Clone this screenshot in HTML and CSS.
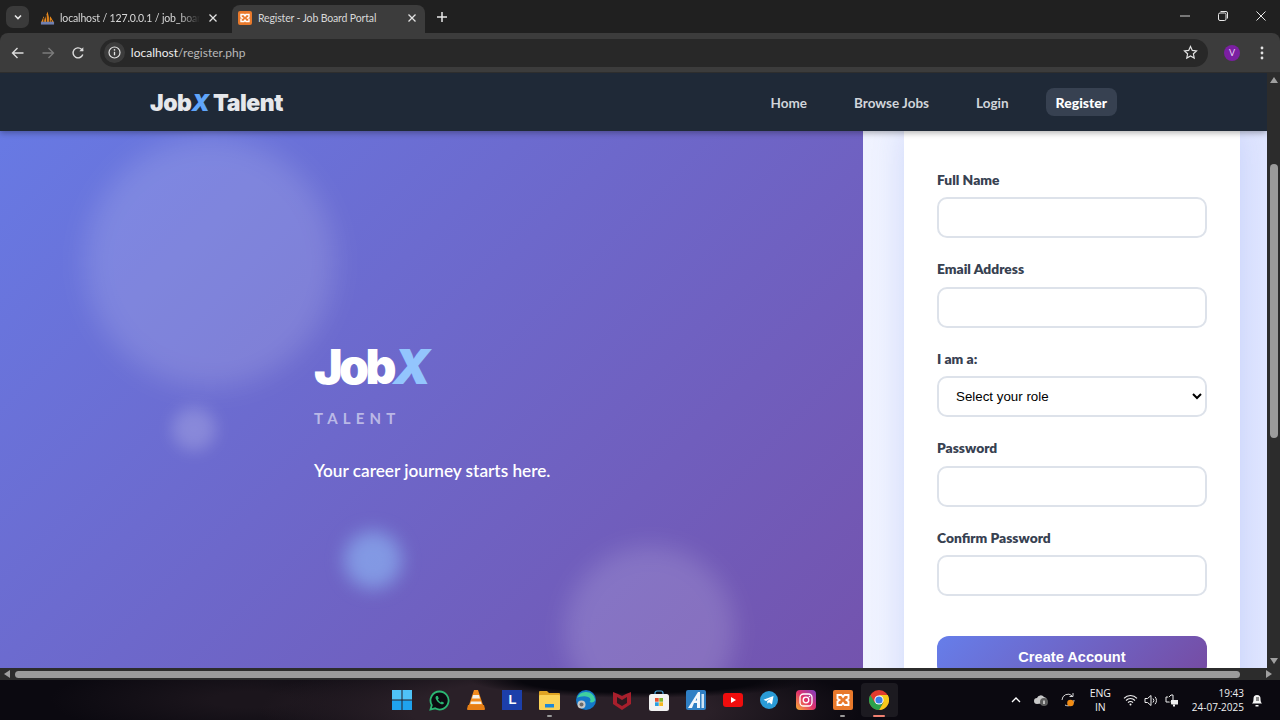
FILE: index.html
```html
<!DOCTYPE html>
<html>
<head>
    <title>Register - Job Board Portal</title>
    <link rel="stylesheet" href="styles.css">
</head>
<body>
    <div class="tabstrip">
        <div class="tab-search">
            <svg width="10" height="10" viewBox="0 0 10 10"><path d="M2 3.5 5 6.5 8 3.5" fill="none" stroke="#e8e8e8" stroke-width="1.6"/></svg>
        </div>
        <div class="tab">
            <svg class="favicon favicon-pma" width="15" height="16" viewBox="0 0 16 16">
                <path d="M1 13 4 6l1 4 3-9 2 8 1-3 4 7z" fill="#e8891c"/>
                <path d="M7 13V5M4 13V8M10 13V7M12 13v-3" stroke="#3b2a1a" stroke-width="1"/>
                <rect x="1" y="12" width="14" height="3" fill="#6f7fb0"/>
            </svg>
            <span class="tab-title tab-title-faded">localhost / 127.0.0.1 / job_boar</span>
            <svg class="tab-close" width="10" height="10" viewBox="0 0 10 10"><path d="M1.5 1.5l7 7M8.5 1.5l-7 7" stroke="#e3e3e3" stroke-width="1.3"/></svg>
        </div>
        <div class="tab tab-active">
            <svg class="favicon" width="14" height="14" viewBox="0 0 14 14">
                <rect width="14" height="14" rx="2" fill="#e8792b"/>
                <path d="M3 3.5h3L7 5l1-1.500h3v2.500L9.500 7 11 8v2.500H8L7 9l-1 1.500H3V8l1.500-1L3 6z" fill="none" stroke="#fff" stroke-width="1.400"/>
            </svg>
            <span class="tab-title">Register - Job Board Portal</span>
            <svg class="tab-close" width="10" height="10" viewBox="0 0 10 10"><path d="M1.5 1.5l7 7M8.5 1.5l-7 7" stroke="#e3e3e3" stroke-width="1.3"/></svg>
        </div>
        <svg class="new-tab" width="12" height="12" viewBox="0 0 12 12"><path d="M6 1v10M1 6h10" stroke="#e8e8e8" stroke-width="1.500"/></svg>
        <div class="window-controls">
            <svg width="10" height="10" viewBox="0 0 10 10"><path d="M0 5h10" stroke="#cfcfcf" stroke-width="1"/></svg>
            <svg width="10" height="10" viewBox="0 0 10 10"><rect x="0.500" y="2" width="7.500" height="7.500" rx="1.500" fill="none" stroke="#e8e8e8"/><path d="M2.500 .5h5.500a1.500 1.500 0 0 1 1.500 1.500v5.500" fill="none" stroke="#e8e8e8"/></svg>
            <svg width="10" height="10" viewBox="0 0 10 10"><path d="M.5.5l9 9M9.500.5l-9 9" stroke="#e8e8e8" stroke-width="1"/></svg>
        </div>
    </div>

    <div class="toolbar">
        <div class="toolbar-btns">
            <svg width="14" height="14" viewBox="0 0 14 14"><path d="M12.500 7h-11M6.500 2 1.500 7l5 5" fill="none" stroke="#dcdcdc" stroke-width="1.400"/></svg>
            <svg width="14" height="14" viewBox="0 0 14 14"><path d="M1.500 7h11M7.500 2l5 5-5 5" fill="none" stroke="#7b7b7b" stroke-width="1.400"/></svg>
            <svg width="14" height="14" viewBox="0 0 14 14"><path d="M11.800 8.500A5 5 0 1 1 10.500 3.200L12 4.700" fill="none" stroke="#dcdcdc" stroke-width="1.400"/><path d="M12.300 1.300v4h-4z" fill="#dcdcdc"/></svg>
        </div>
        <div class="omnibox">
            <div class="site-info">
                <svg width="13" height="13" viewBox="0 0 13 13"><circle cx="6.500" cy="6.500" r="5.500" fill="none" stroke="#e3e3e3" stroke-width="1.200"/><path d="M6.500 5.800v3.500" stroke="#e3e3e3" stroke-width="1.300"/><circle cx="6.500" cy="3.900" r=".8" fill="#e3e3e3"/></svg>
            </div>
            <span class="url"><span class="url-host">localhost</span>/register.php</span>
            <svg class="star" width="15" height="15" viewBox="0 0 15 15"><path d="M7.500 1.500l1.800 3.900 4.200.5-3.100 2.900.8 4.200-3.700-2.100-3.700 2.100.8-4.200L1.500 5.900l4.200-.5z" fill="none" stroke="#e3e3e3" stroke-width="1.200"/></svg>
        </div>
        <div class="avatar">V</div>
        <svg class="kebab" width="4" height="14" viewBox="0 0 4 14"><circle cx="2" cy="2" r="1.400" fill="#e3e3e3"/><circle cx="2" cy="7" r="1.400" fill="#e3e3e3"/><circle cx="2" cy="12" r="1.400" fill="#e3e3e3"/></svg>
    </div>

    <div class="viewport">
        <div class="page">
            <nav class="navbar">
                <div class="brand">Job<em>X</em> Talent</div>
                <div class="nav-links">
                    <a href="#">Home</a>
                    <a href="#">Browse Jobs</a>
                    <a href="#">Login</a>
                    <a href="#" class="nav-active">Register</a>
                </div>
            </nav>
            <div class="register">
                <section class="hero">
                    <span class="blob blob-big"></span>
                    <span class="blob blob-small"></span>
                    <span class="blob blob-blue"></span>
                    <span class="blob blob-pink"></span>
                    <div class="hero-logo">Job<em>X</em></div>
                    <div class="hero-sub">TALENT</div>
                    <p class="hero-tagline">Your career journey starts here.</p>
                </section>
                <section class="form-panel">
                    <form class="form-card">
                        <div class="form-group">
                            <label>Full Name</label>
                            <input type="text">
                        </div>
                        <div class="form-group">
                            <label>Email Address</label>
                            <input type="email">
                        </div>
                        <div class="form-group">
                            <label>I am a:</label>
                            <select><option>Select your role</option></select>
                        </div>
                        <div class="form-group">
                            <label>Password</label>
                            <input type="password">
                        </div>
                        <div class="form-group">
                            <label>Confirm Password</label>
                            <input type="password">
                        </div>
                        <button type="button" class="submit-btn">Create Account</button>
                    </form>
                </section>
            </div>
        </div>
        <div class="vscroll">
            <span class="arrow-up"></span>
            <span class="vthumb"></span>
            <span class="arrow-down"></span>
        </div>
    </div>
    <div class="hscroll">
        <span class="arrow-left"></span>
        <span class="hthumb"></span>
        <span class="arrow-right"></span>
    </div>

    <footer class="taskbar">
        <div class="task-icons">
            <div class="task-icon">
                <svg width="20" height="20" viewBox="0 0 20 20"><rect width="9.500" height="9.500" fill="#4fc3f7"/><rect x="10.500" width="9.500" height="9.500" fill="#4fc3f7"/><rect y="10.500" width="9.500" height="9.500" fill="#1fa2ee"/><rect x="10.500" y="10.500" width="9.500" height="9.500" fill="#1fa2ee"/></svg>
            </div>
            <div class="task-icon">
                <svg width="21" height="21" viewBox="0 0 21 21"><path d="M10.500 1.500a9 9 0 0 0-7.700 13.600L1.500 19.500l4.600-1.200A9 9 0 1 0 10.500 1.500z" fill="#0b0b10" stroke="#2bb673" stroke-width="1.800"/><path d="M7.300 6c-.9.800-1.100 2 .1 4 1.200 2 3 3.600 5 4.200 1.300.3 2.300-.3 2.600-1.500l-2.200-1.200-1 1c-1.200-.6-2.300-1.700-2.900-2.900l.9-1L8.800 6z" fill="#2bb673"/></svg>
            </div>
            <div class="task-icon">
                <svg width="18" height="20" viewBox="0 0 18 20"><path d="M7 0h4l5 15H2z" fill="#f08a1d"/><path d="M6 5h6l1 3.500H5zM4 11.500h10l.7 2.500H3.300z" fill="#f3f0e8"/><path d="M1 15h16l1 4a1 1 0 0 1-1 1H1a1 1 0 0 1-1-1z" fill="#e67e14"/></svg>
            </div>
            <div class="task-icon">
                <div class="icon-l">L</div>
            </div>
            <div class="task-icon">
                <svg width="21" height="20" viewBox="0 0 21 20"><path d="M0 2a1 1 0 0 1 1-1h7l2 2h10a1 1 0 0 1 1 1v3H0z" fill="#e0a423"/><rect y="5" width="21" height="15" rx="1" fill="#fbd257"/><rect x="6" y="14" width="9" height="3.500" fill="#1f88d8"/></svg>
                <i class="running"></i>
            </div>
            <div class="task-icon">
                <svg width="20" height="20" viewBox="0 0 20 20"><circle cx="10" cy="10" r="10" fill="#1478c8"/><path d="M1 8a9.500 9.500 0 0 1 18 1c.6 3-3 4-5.500 3 1.500-1 1.500-4-1.500-5-4-1.500-9 0-11 1z" fill="#3fd0a0"/><circle cx="5.500" cy="14.500" r="4" fill="#c8c8c8"/><circle cx="5.500" cy="14.500" r="2" fill="#6c6c6c"/></svg>
            </div>
            <div class="task-icon">
                <svg width="18" height="20" viewBox="0 0 18 20"><path d="M0 2l5 2 4 2 4-2 5-2v12l-9 6-9-6z" fill="#a81f2c"/><path d="M4 7l5 3 5-3v6l-5 3-5-3z" fill="#2a1a20"/></svg>
            </div>
            <div class="task-icon">
                <svg width="20" height="21" viewBox="0 0 20 21"><path d="M6 5V3a2 2 0 0 1 2-2h4a2 2 0 0 1 2 2v2" fill="none" stroke="#4aa5dc" stroke-width="1.200"/><rect y="4" width="20" height="17" rx="2.500" fill="#f2f2f2"/><rect x="6" y="8" width="3.700" height="3.700" fill="#e8502f"/><rect x="10.300" y="8" width="3.700" height="3.700" fill="#7db52f"/><rect x="6" y="12.300" width="3.700" height="3.700" fill="#2a9fe0"/><rect x="10.300" y="12.300" width="3.700" height="3.700" fill="#f5b81f"/></svg>
            </div>
            <div class="task-icon">
                <svg width="20" height="20" viewBox="0 0 20 20"><rect width="20" height="20" rx="2" fill="#2f7fc4"/><path d="M2 18 12 2h2v16h-3v-5H8l-2 5z" fill="#f2f6fa"/><path d="M9.500 10.500 11 8v2.500z" fill="#2f7fc4"/><path d="M15.500 4H18v14h-2.500z" fill="#cfe4f5"/></svg>
            </div>
            <div class="task-icon">
                <svg width="20" height="14" viewBox="0 0 20 14"><rect width="20" height="14" rx="3" fill="#f00d0d"/><path d="M8 4l5 3-5 3z" fill="#fff"/></svg>
            </div>
            <div class="task-icon">
                <svg width="18" height="18" viewBox="0 0 18 18"><circle cx="9" cy="9" r="9" fill="#2a9bd6"/><path d="M3.500 8.800 13.500 5l-1.500 8.500-3-2.200-1.500 1.500-.4-2.500 4-3-5 2.700z" fill="#fff"/></svg>
            </div>
            <div class="task-icon">
                <svg width="20" height="20" viewBox="0 0 20 20">
                    <defs><linearGradient id="ig" x1="0" y1="1" x2="1" y2="0"><stop offset="0" stop-color="#f9b233"/><stop offset=".5" stop-color="#e1306c"/><stop offset="1" stop-color="#7b3fc4"/></linearGradient></defs>
                    <rect width="20" height="20" rx="4" fill="url(#ig)"/><rect x="4" y="4" width="12" height="12" rx="3.500" fill="none" stroke="#fff" stroke-width="1.300"/><circle cx="10" cy="10" r="2.800" fill="none" stroke="#fff" stroke-width="1.300"/><circle cx="13.500" cy="6.500" r=".8" fill="#fff"/>
                </svg>
            </div>
            <div class="task-icon">
                <svg width="20" height="20" viewBox="0 0 20 20"><rect width="20" height="20" rx="2" fill="#e8792b"/><path d="M4.500 5h4L10 7l1.500-2h4v3.500L13.500 10l2 1.500V15h-4L10 13l-1.500 2h-4v-3.500l2-1.500-2-1.500z" fill="none" stroke="#fff" stroke-width="1.900"/></svg>
                <i class="running"></i>
            </div>
            <div class="task-icon task-icon-active">
                <svg width="20" height="20" viewBox="0 0 20 20"><circle cx="10" cy="10" r="10" fill="#e33b2e"/><path d="M10 20a10 10 0 0 0 8.700-15H10l4.300 7.500z" fill="#f8c91c"/><path d="M1.300 5A10 10 0 0 0 10 20l4.300-7.500H5.700z" fill="#2ba24c"/><circle cx="10" cy="10" r="4.600" fill="#fff"/><circle cx="10" cy="10" r="3.600" fill="#3b7de8"/></svg>
                <i class="running running-active"></i>
            </div>
        </div>
        <div class="tray">
            <svg class="tray-chevron" width="10" height="6" viewBox="0 0 10 6"><path d="M1 5l4-4 4 4" fill="none" stroke="#fff" stroke-width="1.300"/></svg>
            <svg class="tray-cloud" width="14" height="12" viewBox="0 0 14 12"><path d="M3 10a3 3 0 0 1 0-6 4 4 0 0 1 7-1 3.500 3.500 0 0 1 2 6z" fill="#c8c8c8"/><circle cx="10" cy="8" r="4" fill="#5c5c5c"/><path d="M10 6.500v3.500" stroke="#fff" stroke-width="1.200"/></svg>
            <svg class="tray-sync" width="16" height="16" viewBox="0 0 16 16"><path d="M2 8a6 6 0 0 1 10-4.300M14 8a6 6 0 0 1-9 5" fill="none" stroke="#d5d5d5" stroke-width="1"/><path d="M13 1v3.500H9.500" fill="none" stroke="#d5d5d5"/><circle cx="10.500" cy="11" r="3.300" fill="#f28c13"/></svg>
            <div class="tray-lang">ENG<br>IN</div>
            <svg class="tray-wifi" width="15" height="12" viewBox="0 0 15 12"><path d="M1 4.300a9 9 0 0 1 13 0M3 6.500a6.200 6.200 0 0 1 9 0M5 8.600a3.300 3.300 0 0 1 5 0" fill="none" stroke="#f0f0f0" stroke-width="1.100"/><circle cx="7.500" cy="10.600" r="1" fill="#f0f0f0"/></svg>
            <svg class="tray-vol" width="14" height="13" viewBox="0 0 14 13"><path d="M1 4.500h2.500L7 1.500v10l-3.500-3H1z" fill="none" stroke="#f0f0f0"/><path d="M9 4.500a3 3 0 0 1 0 4M11 2.800a5.500 5.500 0 0 1 0 7.400" fill="none" stroke="#f0f0f0"/></svg>
            <svg class="tray-power" width="14" height="14" viewBox="0 0 14 14"><path d="M1 4h3l2-2h2v7H1z" fill="none" stroke="#f0f0f0"/><path d="M6 7h7v4.500H6z" fill="#f0f0f0"/><path d="M9 11.500v2" stroke="#f0f0f0" stroke-width="2"/><path d="M3 2 6 12" stroke="#111"/></svg>
            <div class="tray-clock">19:43<br>24-07-2025</div>
            <svg class="tray-bell" width="12" height="14" viewBox="0 0 12 14"><path d="M1 10.500c1-1 1.500-2 1.500-5a3.500 3.500 0 0 1 7 0c0 3 .5 4 1.500 5z" fill="#f5f5f5"/><path d="M4.500 12h3v1.500h-3z" fill="#f5f5f5"/><path d="M5 5h3M5 7h3" stroke="#222"/></svg>
        </div>
    </footer>
</body>
</html>
```

FILE: styles.css
```css
* {
    box-sizing: border-box;
}
body {
    margin: 0;
    width: 1280px;
    height: 720px;
    overflow: hidden;
    display: flex;
    flex-direction: column;
    background: #202020;
    font-family: Lato, "Open Sans", sans-serif;
}

/* browser chrome */
.tabstrip {
    height: 33px;
    display: flex;
    align-items: flex-end;
    background: #202020;
    padding-left: 6px;
    flex-shrink: 0;
}
.tab-search {
    width: 23px;
    height: 22px;
    margin-bottom: 5px;
    border-radius: 7px;
    background: #3a3a3a;
    display: flex;
    align-items: center;
    justify-content: center;
}
.tab {
    width: 197px;
    height: 28px;
    display: flex;
    align-items: center;
    padding: 0 8px 2px 11px;
    border-radius: 8px 8px 0 0;
    color: #d8d8d8;
    font-size: 10.5px;
    letter-spacing: -0.15px;
}
.tab-active {
    width: 193px;
    background: #3c3c3c;
    padding-left: 6px;
    margin-left: 6px;
}
.favicon {
    flex-shrink: 0;
    margin-right: 6px;
}
.favicon-pma {
    margin-right: 5px;
}
.tab-title {
    flex: 1;
    overflow: hidden;
    white-space: nowrap;
}
.tab-title-faded {
    -webkit-mask-image: linear-gradient(to right, #000 85%, transparent 100%);
}
.tab-close {
    flex-shrink: 0;
    margin-left: 8px;
}
.new-tab {
    margin: 0 0 10px 11px;
}
.window-controls {
    margin-left: auto;
    display: flex;
    align-self: flex-start;
    gap: 28px;
    padding: 11px 14px 0 0;
}
.toolbar {
    height: 40px;
    flex-shrink: 0;
    display: flex;
    align-items: center;
    background: #3c3c3c;
    border-radius: 8px 8px 0 0;
    border-bottom: 1px solid #2e2e2e;
    padding: 0 16px 0 11px;
    color: #e3e3e3;
}
.toolbar-btns {
    display: flex;
    gap: 16px;
    width: 89px;
}
.omnibox {
    width: 1110px;
    height: 28px;
    border-radius: 14px;
    background: #282828;
    display: flex;
    align-items: center;
    padding: 0 10px 0 4px;
    font-size: 12px;
}
.site-info {
    width: 21px;
    height: 21px;
    border-radius: 50%;
    background: #3c3c3c;
    display: flex;
    align-items: center;
    justify-content: center;
    margin-right: 6px;
}
.url {
    color: #b8b8b8;
}
.url-host {
    color: #eeeeee;
}
.star {
    margin-left: auto;
}
.avatar {
    width: 16px;
    height: 16px;
    margin-left: 16px;
    border-radius: 50%;
    background: #7b1fa2;
    color: #e9d6f5;
    font-size: 9px;
    text-align: center;
    line-height: 16px;
}
.kebab {
    margin-left: 20px;
}

/* page */
.viewport {
    flex: 1;
    min-height: 0;
    display: flex;
}
.page {
    flex: 1;
    min-width: 0;
    display: flex;
    flex-direction: column;
    overflow: hidden;
}
.navbar {
    height: 58px;
    flex-shrink: 0;
    display: flex;
    align-items: center;
    justify-content: space-between;
    padding: 2px 150px 0;
    background: #1f2937;
    box-shadow: 0 2px 6px rgba(0,0,0,0.3);
    position: relative;
    z-index: 2;
}
.brand {
    font-family: Inter, sans-serif;
    font-size: 23px;
    font-weight: 900;
    letter-spacing: -0.5px;
    color: #e5e7eb;
}
.brand em {
    color: #60a5fa;
}
.nav-links {
    display: flex;
    gap: 27px;
    margin-top: -2px;
}
.nav-links a {
    padding: 6px 10px 4px;
    border-radius: 8px;
    color: #d1d5db;
    font-size: 13.5px;
    font-weight: 700;
    line-height: 18px;
    text-decoration: none;
}
.nav-links a.nav-active {
    background: #374151;
    color: #fff;
    font-size: 14px;
    font-weight: 900;
}
.register {
    flex: 1;
    min-height: 0;
    display: flex;
}
.hero {
    width: 863px;
    flex-shrink: 0;
    position: relative;
    overflow: hidden;
    display: flex;
    flex-direction: column;
    justify-content: center;
    padding: 21px 0 0 314px;
    background: linear-gradient(135deg, #667eea 0%, #764ba2 100%) no-repeat 0 -165px / 100% 1000px;
    color: #fff;
}
.blob {
    position: absolute;
    border-radius: 50%;
}
.blob-big {
    left: 85px;
    top: 6px;
    width: 250px;
    height: 250px;
    background: rgba(255,255,255,0.14);
    filter: blur(14px);
}
.blob-small {
    left: 172px;
    top: 276px;
    width: 44px;
    height: 44px;
    background: rgba(255,255,255,0.2);
    filter: blur(8px);
}
.blob-blue {
    left: 344px;
    top: 400px;
    width: 58px;
    height: 58px;
    background: rgba(147,197,253,0.55);
    filter: blur(9px);
}
.blob-pink {
    left: 565px;
    top: 415px;
    width: 170px;
    height: 170px;
    background: rgba(255,255,255,0.15);
    filter: blur(12px);
}
.hero-logo,
.hero-sub,
.hero-tagline {
    position: relative;
}
.hero-logo {
    font-family: Inter, sans-serif;
    font-size: 48px;
    font-weight: 900;
    line-height: 58px;
    letter-spacing: -3.5px;
}
.hero-logo em {
    color: #93c5fd;
}
.hero-sub {
    margin-top: 12px;
    font-size: 15px;
    font-weight: 700;
    letter-spacing: 5.2px;
    line-height: 20px;
    color: rgba(255,255,255,0.55);
}
.hero-tagline {
    margin: 31px 0 0;
    font-size: 17.2px;
    font-weight: 600;
    line-height: 24px;
}
.form-panel {
    flex: 1;
    min-width: 0;
    padding: 0 27px 0 41px;
    overflow: hidden;
    background: linear-gradient(90deg, #f0f3ff 0%, #e0e6ff 100%);
}
.form-card {
    background: #fff;
    padding: 39px 33px 0;
    height: 700px;
    box-shadow: 0 0 30px rgba(102,126,234,0.22);
}
.form-group {
    margin-bottom: 21px;
}
.form-group label {
    display: block;
    margin-bottom: 7px;
    font-size: 13.8px;
    font-weight: 800;
    line-height: 20.400px;
    color: #374151;
}
.form-group input,
.form-group select {
    display: block;
    width: 100%;
    height: 41px;
    padding: 0 13px;
    border: 2px solid #dde2ea;
    border-radius: 10px;
    background: #fff;
    font-family: "Liberation Sans", Arial, sans-serif;
    font-size: 13.330px;
    color: #000;
}
.submit-btn {
    display: block;
    width: 100%;
    height: 41px;
    margin-top: 40px;
    border: none;
    border-radius: 12px;
    background: linear-gradient(135deg, #667eea 0%, #764ba2 100%);
    color: #fff;
    font-family: "Liberation Sans", Arial, sans-serif;
    font-size: 14.600px;
    font-weight: 700;
}

/* scrollbars */
.vscroll {
    width: 13px;
    flex-shrink: 0;
    display: flex;
    flex-direction: column;
    align-items: center;
    background: #2c2c2c;
}
.arrow-up {
    margin-top: 4px;
    border: 4.500px solid transparent;
    border-top: 0;
    border-bottom: 6px solid #a0a0a0;
}
.vthumb {
    width: 8px;
    height: 274px;
    margin-top: 81px;
    border-radius: 4px;
    background: #9b9b9b;
}
.arrow-down {
    margin-top: auto;
    margin-bottom: 4px;
    border: 4.500px solid transparent;
    border-bottom: 0;
    border-top: 6px solid #a0a0a0;
}
.hscroll {
    height: 12px;
    flex-shrink: 0;
    display: flex;
    align-items: center;
    padding: 0 4px 0 4px;
    background: #2c2c2c;
}
.arrow-left {
    border: 4.500px solid transparent;
    border-left: 0;
    border-right: 6px solid #a0a0a0;
}
.hthumb {
    width: 1225px;
    height: 7px;
    margin-left: 5px;
    border-radius: 4px;
    background: #9b9b9b;
}
.arrow-right {
    margin-left: auto;
    margin-right: 4px;
    border: 4.500px solid transparent;
    border-right: 0;
    border-left: 6px solid #a0a0a0;
}

/* windows taskbar */
.taskbar {
    height: 40px;
    flex-shrink: 0;
    display: flex;
    align-items: center;
    padding-left: 384px;
    background:
        radial-gradient(ellipse 170px 18px at 640px 0, #08070d 70%, transparent 100%),
        radial-gradient(ellipse 300px 60px at 560px 30px, #2a2028 50%, transparent 100%),
        radial-gradient(ellipse 200px 40px at 250px 20px, #1b151c 20%, transparent 100%),
        #0b0910;
}
.task-icons {
    display: flex;
    height: 100%;
}
.task-icon {
    width: 36.700px;
    position: relative;
    display: flex;
    align-items: center;
    justify-content: center;
}
.task-icon-active {
    margin: 3px 0;
    border-radius: 4px;
    background: rgba(255,255,255,0.07);
}
.icon-l {
    width: 20px;
    height: 20px;
    background: #1c3faa;
    color: #fff;
    font-family: "Liberation Sans", sans-serif;
    font-size: 13px;
    font-weight: 700;
    line-height: 20px;
    text-align: center;
}
.running {
    position: absolute;
    left: 50%;
    bottom: 3px;
    width: 5px;
    height: 2px;
    margin-left: -2.500px;
    border-radius: 1px;
    background: #9a9a9a;
}
.running-active {
    bottom: 0;
    width: 12px;
    margin-left: -6px;
    background: #f08070;
}
.tray {
    margin-left: auto;
    display: flex;
    align-items: center;
    height: 100%;
    padding-right: 17px;
    color: #f0f0f0;
    font-family: "Open Sans", sans-serif;
    font-size: 10.500px;
    line-height: 14px;
}
.tray-chevron {
    margin-right: 13px;
}
.tray-cloud {
    margin-right: 12px;
}
.tray-sync {
    margin-right: 14px;
}
.tray-lang {
    text-align: center;
    margin-right: 12px;
}
.tray-wifi {
    margin-right: 6px;
}
.tray-vol {
    margin-right: 7px;
}
.tray-clock {
    width: 65px;
    text-align: right;
    font-size: 10px;
}
.tray-bell {
    margin-left: 7px;
}
```
